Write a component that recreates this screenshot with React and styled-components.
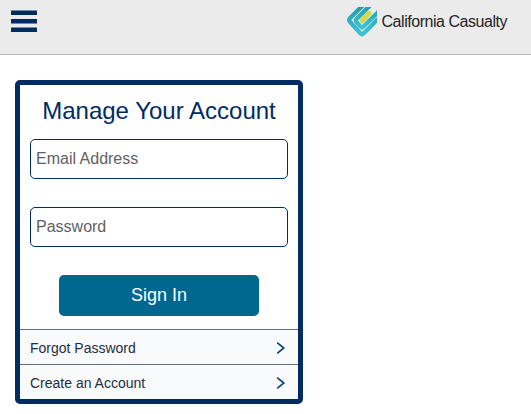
import React from "react";
import styled, { createGlobalStyle } from "styled-components";

const App = () => {
  return (
    <>
      <GlobalStyle />
      <Header>
        <MenuButton aria-label="Menu">
          <MenuIcon />
        </MenuButton>
        <Brand>
          <LogoMark />
          <BrandName>California Casualty</BrandName>
        </Brand>
      </Header>
      <Main>
        <Card>
          <Form>
            <Title>Manage Your Account</Title>
            <Input type="text" placeholder="Email Address" />
            <Input type="password" placeholder="Password" />
            <Button type="button">Sign In</Button>
          </Form>
          <LinkRow>
            Forgot Password
            <Chevron />
          </LinkRow>
          <LinkRow>
            Create an Account
            <Chevron />
          </LinkRow>
        </Card>
      </Main>
    </>
  );
};

export default App;

const MenuIcon = () => (
  <MenuSvg viewBox="0 0 26 22">
    <rect y="0.5" width="26" height="4.5" rx="0.5" />
    <rect y="9" width="26" height="4.5" rx="0.5" />
    <rect y="17.6" width="26" height="4.4" rx="0.5" />
  </MenuSvg>
);

const LogoMark = () => (
  <LogoSvg viewBox="0 0 30 30">
    <defs>
      <linearGradient id="teal" x1="0" y1="0" x2="0" y2="1">
        <stop offset="0" stopColor="#239aa8" />
        <stop offset="1" stopColor="#3cc4d6" />
      </linearGradient>
    </defs>
    {/* outer and inner bands */}
    <g fill="none" stroke="url(#teal)" strokeWidth="4.3">
      <path d="M16 -1.8 L3 11.2 Q1.4 13 3 14.8 L13.2 26.2 Q15 28 16.8 26.2 L33 10" />
      <path d="M23.3 -1.8 L9.6 11.9 Q8.2 13.5 9.6 15.2 L13.4 19.6 Q15 21.2 16.6 19.6 L33 3.2" />
    </g>
    {/* yellow centre */}
    <path
      d="M20 4.6 Q21 3.8 22.2 4.1 L24.2 4.6 Q25.2 6 24.4 7.6 L16.4 15.8 Q14.8 17 13.4 15.4 Q11.6 13.6 12.8 12 Z"
      fill="#d3d94a"
    />
  </LogoSvg>
);

const Chevron = () => (
  <ChevronSvg viewBox="0 0 10 14">
    <path d="M1.2 1.6 L7.8 7 L1.2 12.4" />
  </ChevronSvg>
);

const GlobalStyle = createGlobalStyle`
  * {
    box-sizing: border-box;
  }

  body {
    margin: 0;
    background: #fff;
    font-family: "Liberation Sans", Arial, sans-serif;
  }
`;

const Header = styled.header`
  display: flex;
  justify-content: space-between;
  align-items: flex-start;
  height: 55px;
  padding: 7px 23px 0 11px;
  background: #ebebeb;
  border-bottom: 1px solid #adb9c3;
`;

const MenuButton = styled.button`
  margin-top: 3px;
  padding: 0;
  border: none;
  background: none;
  cursor: pointer;
`;

const MenuSvg = styled.svg`
  display: block;
  width: 26px;
  height: 22px;
  fill: #002c61;
`;

const Brand = styled.div`
  display: flex;
  align-items: center;
  gap: 4.5px;
`;

const LogoSvg = styled.svg`
  width: 30px;
  height: 30px;
`;

const BrandName = styled.span`
  width: 126.5px;
  color: #242424;
  font-size: 16px;
  line-height: 28px;
  letter-spacing: -0.46px;
  white-space: nowrap;
`;

const Main = styled.main`
  padding: 25px 15px 0;
`;

const Card = styled.section`
  width: 288px;
  border: 5px solid #002c61;
  border-radius: 5px;
  overflow: hidden;
`;

const Form = styled.form`
  display: flex;
  flex-direction: column;
  height: 244px;
  padding: 10px 10px 0;
`;

const Title = styled.h1`
  height: 44px;
  margin: 0;
  color: #002c61;
  font-size: 24px;
  font-weight: 400;
  line-height: 31px;
  text-align: center;
  white-space: nowrap;
`;

const Input = styled.input`
  height: 40px;
  margin-bottom: 28px;
  padding: 0 5px;
  border: 1px solid #002c61;
  border-radius: 5px;
  background: #fff;
  font-family: inherit;
  font-size: 16px;

  &::placeholder {
    color: #616161;
  }
`;

const Button = styled.button`
  align-self: center;
  width: 200px;
  height: 41px;
  padding: 0;
  border: none;
  border-radius: 5px;
  background: #006890;
  color: #fff;
  font-family: inherit;
  font-size: 18px;
  cursor: pointer;
`;

const LinkRow = styled.a`
  display: flex;
  justify-content: space-between;
  align-items: center;
  height: 35px;
  padding: 2px 12px 0 10px;
  border-top: 1px solid #5c6f80;
  background: #f9fafc;
  color: #1f2d3d;
  font-size: 14px;
  cursor: pointer;
`;

const ChevronSvg = styled.svg`
  width: 10px;
  height: 14px;
  fill: none;
  stroke: #0b4a6f;
  stroke-width: 1.7;
`;
